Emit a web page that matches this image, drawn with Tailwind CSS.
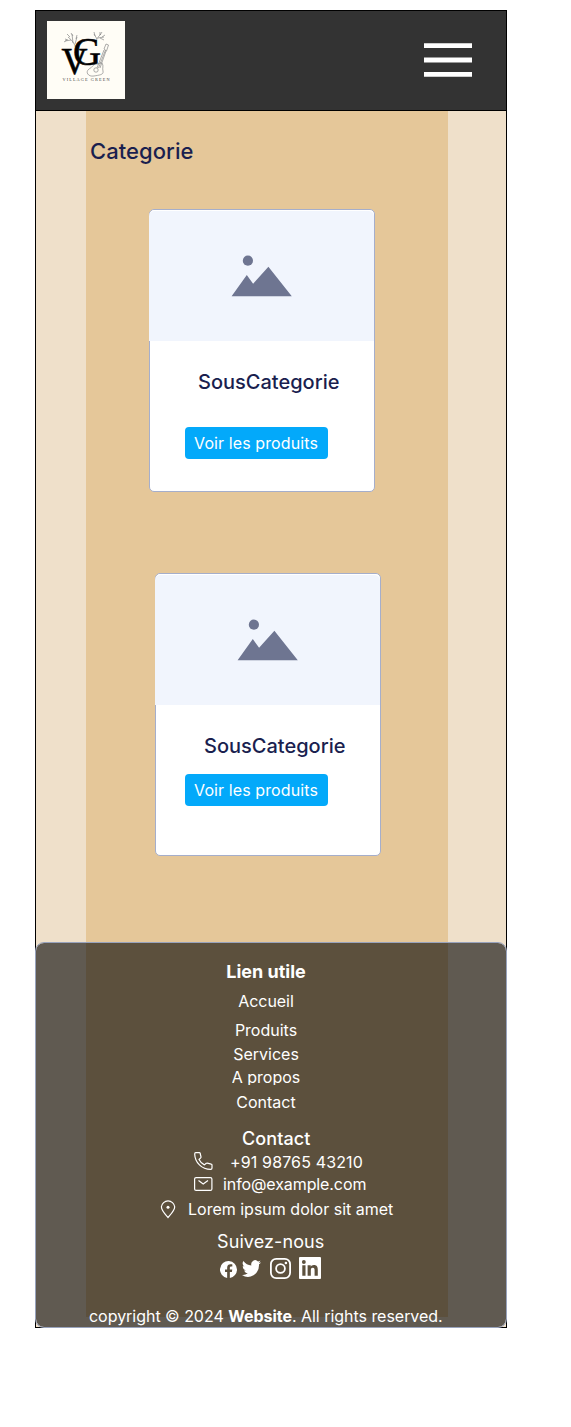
<!DOCTYPE html>
<html lang="fr">
<head>
<meta charset="utf-8">
<title>Village Green</title>
<script src="https://cdn.jsdelivr.net/npm/@tailwindcss/browser@4"></script>
</head>
<body class="bg-white font-['Inter',sans-serif]">
<div class="ml-[35px] mt-[10px] flex h-[1318px] w-[472px] flex-col border border-black bg-[#efe0ca] bg-[linear-gradient(#e5c799,#e5c799)] bg-[length:362px_1207px] bg-[position:50px_99px] bg-no-repeat">
  <header class="flex h-[100px] shrink-0 items-start justify-between border-b border-black bg-[#333333] pl-[11px] pr-[34px] pt-[10px]">
    <svg class="size-[78px]" viewBox="0 0 78 78">
      <rect width="78" height="78" fill="#fffdf6"/>
      <g fill="none" stroke="#888" stroke-width=".7">
        <path d="M29 28C28 23 25 19 21 16M26 22l-1-9M24 19l-6 1M28 23l2-7M49 22c0-4 2-6 5-9M50 18l-3-5M51 17l6-1M53 14l0-3"/>
        <path d="M20 13l3 3M18 18l3 1M24 12l2 3M17 21l3-2M30 14l-1 4M47 11l1 4M55 11l-2 3M58 14l-3 2M57 19l-4-2"/>
        <path d="M49 43c-3 0-4 4-7 5-4 3-1 8 5 7 5-1 10-1 9-5-1-3 1-5-1-8-2-1-4 2-6 1z"/>
        <path d="M50 47l7-18M51.500 47l7-18M53 47l6-17M57 28l2-5 2.500 1-2 6z"/>
        <circle cx="49" cy="49" r="2.200"/>
      </g>
      <g font-family="Liberation Serif, serif" fill="#000" stroke="#000" stroke-width=".6">
        <text x="26" y="44" font-size="41" textLength="28" lengthAdjust="spacingAndGlyphs">G</text>
        <text x="14.500" y="52.500" font-size="38" textLength="26" lengthAdjust="spacingAndGlyphs">V</text>
      </g>
      <text x="15.500" y="59.500" font-family="Liberation Serif, serif" font-size="4.300" fill="#444" textLength="47">VILLAGE GREEN</text>
    </svg>
    <svg class="mt-[22px] h-[34px] w-12" viewBox="0 0 48 34" fill="#fff"><path d="M0 .25h48V5H0zM0 14.500h48v5H0zM0 29h48v4.750H0z"/></svg>
  </header>
  <main class="flex h-[831px] shrink-0 flex-col">
    <h1 class="ml-[54px] mt-[26px] text-[22px] font-medium leading-7 tracking-[0.05px] text-[#1a1f4f]">Categorie</h1>
    <article class="ml-[113px] mt-[44px] h-[283px] w-[226px] shrink-0 rounded-[5px] border border-[#a5aecb] bg-white">
      <div class="-ml-px h-[131px] w-[225px] rounded-t-[6px] border-t border-white bg-[#f1f5fd]">
        <svg class="ml-[82px] mt-[44px] h-[42px] w-[62px]" viewBox="0 0 62 42" fill="#6e7591"><circle cx="16.900" cy="5.700" r="5.100"/><path d="M.6 41.300 15.800 20l6.300 8.700L37.400 11.700 60.800 41.300z"/></svg>
      </div>
      <h2 class="ml-[48px] mt-[29px] text-[20px] font-medium leading-6 text-[#1a1f4f]">SousCategorie</h2>
      <button class="ml-[35px] mt-[33px] block h-8 w-[143px] rounded bg-[#03a9fa] pr-px text-center text-[16px] leading-8 tracking-[0.1px] text-white">Voir les produits</button>
    </article>
    <article class="ml-[119px] mt-[81px] h-[283px] w-[226px] shrink-0 rounded-[5px] border border-[#a5aecb] bg-white">
      <div class="-ml-px h-[131px] w-[225px] rounded-t-[6px] border-t border-white bg-[#f1f5fd]">
        <svg class="ml-[82px] mt-[44px] h-[42px] w-[62px]" viewBox="0 0 62 42" fill="#6e7591"><circle cx="16.900" cy="5.700" r="5.100"/><path d="M.6 41.300 15.800 20l6.300 8.700L37.400 11.700 60.800 41.300z"/></svg>
      </div>
      <h2 class="ml-[48px] mt-[29px] text-[20px] font-medium leading-6 text-[#1a1f4f]">SousCategorie</h2>
      <button class="ml-[29px] mt-[16px] block h-8 w-[143px] rounded bg-[#03a9fa] pr-px text-center text-[16px] leading-8 tracking-[0.1px] text-white">Voir les produits</button>
    </article>
  </main>
  <footer class="-mx-px h-[386px] shrink-0 rounded-[9px] border border-[#98a3bd] bg-black/60 bg-clip-padding text-[16px] font-normal leading-5 text-white">
    <nav class="mr-[10px] flex flex-col items-center pt-[18px]">
      <h3 class="text-[18px] font-bold leading-[22px]">Lien utile</h3>
      <a class="mt-2 tracking-[-0.05px]">Accueil</a>
      <a class="mt-[9px]">Produits</a>
      <a class="mt-1">Services</a>
      <a class="mt-[3px] h-[18px] overflow-hidden">A propos</a>
      <a class="mt-[7px]">Contact</a>
    </nav>
    <section class="mt-[16px] flex flex-col items-start">
      <h3 class="ml-[206px] text-[18px] font-medium leading-[22px] tracking-[0.1px]">Contact</h3>
      <div class="ml-[158px] mt-[2px] flex h-5">
        <svg class="mr-[17px] h-5 w-[19px]" viewBox="0 0 19 20" fill="none" stroke="#fff" stroke-width="1.200" stroke-linejoin="round"><path d="M1.700.7h3.600c.5 0 .8.3.9.8l.8 3.300c.1.400 0 .7-.3 1L5 7.500c1.100 2.200 2.900 4.200 5.400 5.400l1.900-1.600c.3-.3.6-.3 1-.2l3.900 1c.5.100.8.4.8.900v3.100c0 .8-.5 1.300-1.300 1.300C7.800 17.400.9 10.500.700 2c0-.8.3-1.300 1-1.300z"/></svg>
        <span class="tracking-[0.14px]">+91 98765 43210</span>
      </div>
      <div class="ml-[158px] mt-[2px] flex h-5">
        <svg class="mr-[10px] h-5 w-[19px]" viewBox="0 0 19 20" fill="none" stroke="#fff" stroke-width="1.200"><rect x=".6" y="3.600" width="17.300" height="12.800" rx="1.500"/><path d="M4.500 6.500 9.200 10l4.800-3.500"/></svg>
        <span class="tracking-[-0.1px]">info@example.com</span>
      </div>
      <div class="ml-[124px] mt-[5px] flex h-5">
        <svg class="mr-[12px] h-5 w-4" viewBox="0 0 16 20" fill="none" stroke="#fff" stroke-width="1.200"><path d="M8 18.500C4.500 14.500 1.400 11.500 1.400 7.800a6.700 6.700 0 0 1 13.300 0c0 3.700-3.200 6.700-6.700 10.700z"/><circle cx="8" cy="8.300" r="1.500" fill="#fff" stroke="none"/></svg>
        <span>Lorem ipsum dolor sit amet</span>
      </div>
    </section>
    <section class="mt-[12px]">
      <h3 class="ml-[181px] text-[18px] leading-[22px] tracking-[0.1px]">Suivez-nous</h3>
      <div class="ml-[184px] mt-[4px] flex h-[22px] items-start">
        <svg class="mt-[4px] size-[17px]" viewBox="0 0 24 24" fill="#fff"><path d="M24 12a12 12 0 1 0-13.900 11.900v-8.400H7.100V12h3V9.400c0-3 1.800-4.700 4.600-4.700 1.300 0 2.700.2 2.700.2v3h-1.500c-1.500 0-2 .9-2 1.900V12h3.400l-.5 3.500h-2.900v8.400A12 12 0 0 0 24 12z"/></svg>
        <svg class="ml-[5px] mt-[3px] h-[17px] w-[19px]" viewBox="0 2 24 20" preserveAspectRatio="none" fill="#fff"><path d="M24 4.600a10 10 0 0 1-2.800.8 5 5 0 0 0 2.100-2.700c-1 .6-2 1-3.100 1.200a4.900 4.900 0 0 0-8.400 4.500A14 14 0 0 1 1.700 3.200a4.900 4.900 0 0 0 1.500 6.600 5 5 0 0 1-2.200-.6v.1a4.900 4.900 0 0 0 3.900 4.800 5 5 0 0 1-2.200.1 4.900 4.900 0 0 0 4.600 3.400A10 10 0 0 1 0 19.600 14 14 0 0 0 21.500 7.100a10 10 0 0 0 2.500-2.500z"/></svg>
        <svg class="ml-[9px] mt-px size-[21px]" viewBox="0 0 21 21" fill="none" stroke="#fff" stroke-width="1.800"><rect x=".9" y=".9" width="19.200" height="19.200" rx="5.300"/><circle cx="10.500" cy="10.500" r="4.400"/><circle cx="15.900" cy="5" r="1.300" fill="#fff" stroke="none"/></svg>
        <svg class="ml-[8px] size-[22px]" viewBox="0 0 24 24" fill="#fff"><path fill-rule="evenodd" d="M1 0h22c.6 0 1 .4 1 1v22c0 .6-.4 1-1 1H1c-.6 0-1-.4-1-1V1c0-.6.4-1 1-1zM3.600 9v11.500h3.500V9zM5.300 3.300a2.100 2.100 0 1 0 0 4.200 2.100 2.100 0 0 0 0-4.200zM9.400 9v11.500h3.500v-5.700c0-1.500.3-3 2.200-3s1.900 1.700 1.900 3.100v5.600h3.500v-6.300c0-3.100-.7-5.500-4.300-5.500-1.700 0-2.900.9-3.400 1.900V9z"/></svg>
      </div>
    </section>
    <p class="ml-[53px] mt-[27px] whitespace-nowrap tracking-[-0.03px]">copyright © 2024 <b class="font-bold">Website</b>. All rights reserved.</p>
  </footer>
</div>
</body>
</html>
